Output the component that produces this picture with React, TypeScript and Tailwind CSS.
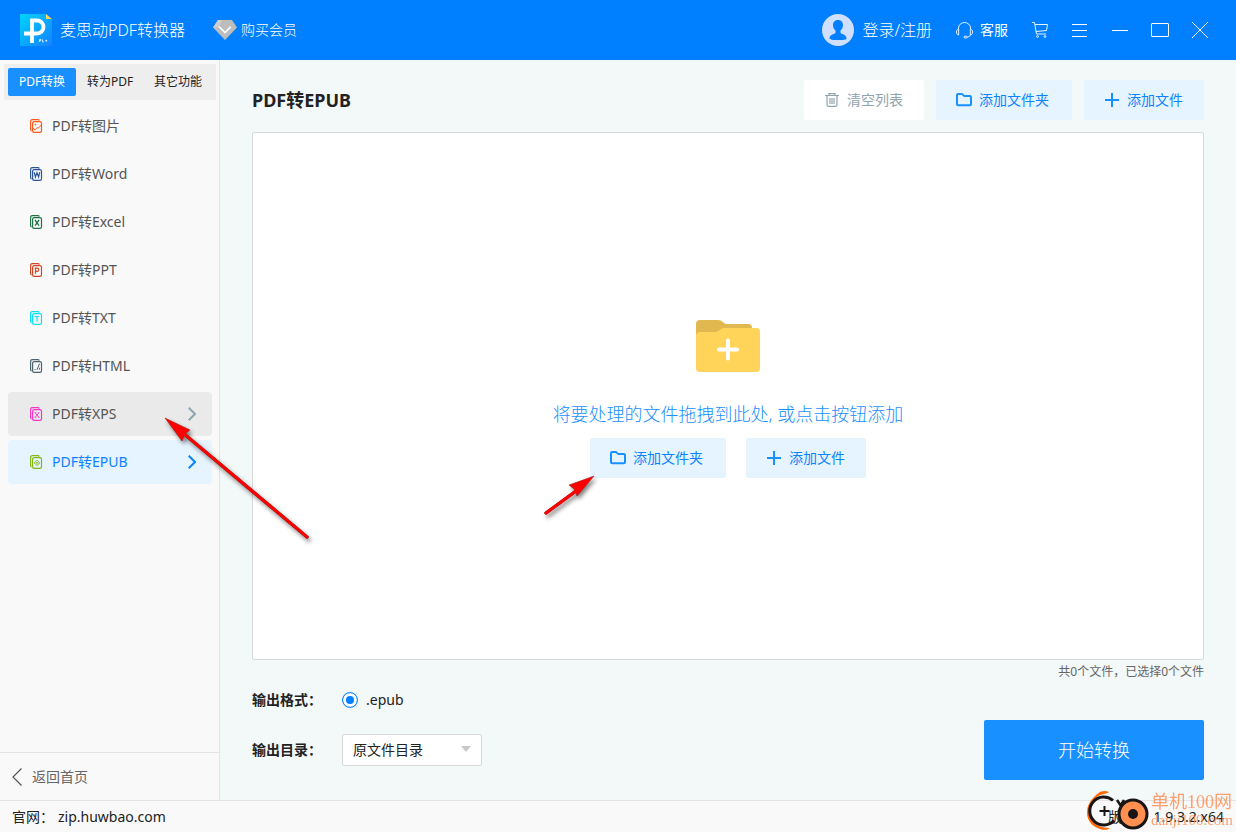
import React, { useState } from 'react';

type Tool = { id: string; label: string; color: string; glyph: React.ReactNode };

const TOOLS: Tool[] = [
  {
    id: 'image',
    label: 'PDF转图片',
    color: '#ff5a1f',
    glyph: (
      <>
        <path d="M3 9.500l2.200 1.200 2-2.200 1 .8 3-3.300" />
        <circle cx="5.500" cy="5.600" r="0.500" />
      </>
    ),
  },
  { id: 'word', label: 'PDF转Word', color: '#2b579a', glyph: <path d="M4.200 5.200l1.200 4.800L7 5.800 8.600 10l1.200-4.800" strokeWidth="1.200" /> },
  { id: 'excel', label: 'PDF转Excel', color: '#217346', glyph: <path d="M5 5l4 5.600M9 5l-4 5.600" strokeWidth="1.300" /> },
  { id: 'ppt', label: 'PDF转PPT', color: '#d24726', glyph: <path d="M5.500 10.800V5.200h1.700a1.500 1.500 0 010 3.200H5.500" strokeWidth="1.200" /> },
  { id: 'txt', label: 'PDF转TXT', color: '#0ce0f5', glyph: <path d="M4.600 5.500h4.800M7 5.500v5.300" strokeWidth="1.200" /> },
  { id: 'html', label: 'PDF转HTML', color: '#4c6370', glyph: <path d="M4.600 10.500h1M9.500 4.600L7 10.800M9.400 8.800v1.800" /> },
  {
    id: 'xps',
    label: 'PDF转XPS',
    color: '#f436c8',
    glyph: <path d="M5.200 5.800l3.600 4.400M8.800 5.800l-3.600 4.400M4.700 5.700h1.500M7.800 5.700h1.500M4.700 10.300h1.500M7.800 10.300h1.500" strokeWidth="0.900" />,
  },
  {
    id: 'epub',
    label: 'PDF转EPUB',
    color: '#84b816',
    glyph: (
      <>
        <path d="M7 5.200L9.700 7.900 7 10.600 4.300 7.900z" />
        <path d="M6.100 7.900h1.800M7 7v1.800" strokeWidth="0.800" />
      </>
    ),
  },
];

const TABS = ['PDF转换', '转为PDF', '其它功能'];

const ToolIcon: React.FC<{ tool: Tool }> = ({ tool }) => (
  <svg width="14" height="14" viewBox="0 0 14 14" className="shrink-0" fill="none" stroke={tool.color} strokeWidth="1" aria-hidden="true">
    <path d="M1.600 12C.9 11.800.6 11.300.6 10.600V2.200C.6 1.200 1.200.6 2.200.6h5.600c.8 0 1.300.3 1.500 1" strokeWidth="1.200" />
    <rect x="2.600" y="2.600" width="8.900" height="10.800" rx="1.600" strokeWidth="1.200" />
    {tool.glyph}
  </svg>
);

const FolderIcon = () => (
  <svg width="16" height="14" viewBox="0 0 16 14" fill="none" stroke="#1890ff" strokeWidth="2" strokeLinejoin="round" aria-hidden="true">
    <path d="M1 11.200V2.200Q1 1 2.200 1h3.400q.5 0 .9.400l1.200 1.200q.4.400.9.400h5.200Q15 3 15 4.200v7q0 1-1.200 1H2.200Q1 12.200 1 11.200z" />
  </svg>
);

const PlusIcon = () => (
  <svg width="16" height="14" viewBox="0 0 16 14" stroke="#1890ff" strokeWidth="2" aria-hidden="true">
    <path d="M8 0v14M1 7h14" />
  </svg>
);

const AddFolderButton = () => (
  <button type="button" className="flex h-10 w-[136px] items-center gap-[7px] rounded-xs bg-[#e6f4ff] pl-5 text-sm text-[#0a84ff]">
    <FolderIcon />
    添加文件夹
  </button>
);

const AddFileButton = () => (
  <button type="button" className="flex h-10 w-[120px] items-center gap-[7px] rounded-xs bg-[#e6f4ff] pl-5 text-sm text-[#0a84ff]">
    <PlusIcon />
    添加文件
  </button>
);

const Logo = () => (
  <svg width="32" height="32" viewBox="0 0 32 32" aria-hidden="true">
    <defs>
      <linearGradient id="logo" x1="0" y1="0" x2="1" y2="1">
        <stop offset="0" stopColor="#00d5ff" />
        <stop offset="1" stopColor="#1580ff" />
      </linearGradient>
    </defs>
    <path d="M0 0h26l6 6v26H0z" fill="url(#logo)" />
    <path d="M26 0v5h6z" fill="#ffd45c" />
    <path d="M12 29V6.500h5a6.500 6.500 0 010 13H4" fill="none" stroke="#fff" strokeWidth="3.800" />
    <path d="M19.500 28v-2.500h1.500v1.200h-1.500M22.500 25.500v2.300h1.500M25.300 26.700h2M26.300 25.700v2" fill="none" stroke="#fff" strokeWidth="0.700" />
  </svg>
);

const WindowButton: React.FC<{ label: string; children: React.ReactNode }> = ({ label, children }) => (
  <button type="button" aria-label={label} className="flex h-6 w-6 items-center justify-center">
    {children}
  </button>
);

const TopBar = () => (
  <header className="flex h-[60px] items-center bg-[#007fff] pr-6 pl-5 text-white">
    <Logo />
    <h1 className="ml-2 text-base font-light">麦思动PDF转换器</h1>
    <button type="button" className="ml-7 flex items-center gap-1 text-sm font-light">
      <svg width="24" height="20" viewBox="0 0 24 20" aria-hidden="true">
        <path d="M5 0h14l5 7.500L12 20 0 7.500z" fill="#bdbdbd" />
        <path d="M5 0L0 7.500h6L9 0z" fill="#cecece" />
        <path d="M6.500 7l5.500 5.500L17.500 7" fill="none" stroke="#fff" strokeWidth="1.600" strokeLinecap="round" />
      </svg>
      购买会员
    </button>
    <button type="button" className="ml-auto flex items-center gap-2 text-base font-light">
      <svg width="32" height="32" viewBox="0 0 32 32" aria-hidden="true">
        <circle cx="16" cy="16" r="16" fill="#cfdfff" />
        <path
          d="M16 6c3.200 0 5 2.200 5 5 0 2.500-1 4.300-2.500 5.500v1.700c0 .8.500 1.200 1.300 1.500 2.700 1 4.700 2 4.700 5 0 1-3.500 1.300-8.500 1.300s-8.500-.3-8.500-1.300c0-3 2-4 4.700-5 .8-.3 1.300-.7 1.300-1.500v-1.700C12 15.300 11 13.500 11 11c0-2.800 1.800-5 5-5z"
          fill="#007fff"
        />
      </svg>
      登录/注册
    </button>
    <button type="button" className="ml-6 flex items-center gap-[7px] text-sm">
      <svg width="17" height="17" viewBox="0 0 17 17" fill="none" stroke="#fff" strokeWidth="0.900" aria-hidden="true">
        <path d="M2.500 7V6a6 5.500 0 0112 0v1M2.700 7.200c-1.400 0-2.200 1-2.200 2.800s.8 3 2.200 3zM14.300 7.200c1.400 0 2.200 1 2.200 2.800s-.8 3-2.200 3zM14.300 13q-.5 2-3.300 2.200" />
        <rect x="8" y="14.200" width="3" height="1.800" rx="0.900" />
      </svg>
      客服
    </button>
    <div className="ml-5 flex items-center gap-4">
      <WindowButton label="购物车">
        <svg width="16" height="16" viewBox="0 0 16 16" fill="none" stroke="#fff" strokeWidth="0.900" aria-hidden="true">
          <path d="M0 .5h2.500l2 11.500h9.500M3 2.500h12.500L14.500 8.500 4 9.500" />
          <circle cx="5.500" cy="14.500" r="0.900" />
          <circle cx="13" cy="14.500" r="0.900" />
        </svg>
      </WindowButton>
      <WindowButton label="菜单">
        <svg width="16" height="14" viewBox="0 0 16 14" stroke="#fff" aria-hidden="true">
          <path d="M0 1.500h15M0 7.500h15M0 13.500h15" />
        </svg>
      </WindowButton>
      <WindowButton label="最小化">
        <svg width="16" height="16" viewBox="0 0 16 16" stroke="#fff" aria-hidden="true">
          <path d="M0 8.500h16" />
        </svg>
      </WindowButton>
      <WindowButton label="最大化">
        <svg width="18" height="14" viewBox="0 0 18 14" fill="none" stroke="#fff" aria-hidden="true">
          <rect x="0.500" y="0.500" width="17" height="13" rx="0.500" />
        </svg>
      </WindowButton>
      <WindowButton label="关闭">
        <svg width="16" height="16" viewBox="0 0 16 16" stroke="#fff" aria-hidden="true">
          <path d="M0 0l16 16M16 0L0 16" />
        </svg>
      </WindowButton>
    </div>
  </header>
);

const Sidebar = () => {
  const [tab, setTab] = useState(TABS[0]);
  const [active, setActive] = useState('epub');
  const hovered = 'xps';

  return (
    <aside className="flex w-[220px] shrink-0 flex-col border-r border-[#e4e4e4] bg-[#f9f9f9]">
      <div className="mr-[3px] ml-1 mt-1 flex rounded-xs bg-[#eeeeee] p-1 text-xs">
        {TABS.map((name) => (
          <button
            key={name}
            type="button"
            onClick={() => setTab(name)}
            className={`h-7 flex-1 rounded-xs ${tab === name ? 'bg-[#1890ff] text-white' : 'text-[#222222]'}`}
          >
            {name}
          </button>
        ))}
      </div>
      <nav className="mt-1 mr-[7px] ml-2 flex flex-1 flex-col gap-1">
        {TOOLS.map((tool) => {
          const isActive = tool.id === active;
          const isHovered = tool.id === hovered;
          return (
            <button
              key={tool.id}
              type="button"
              onClick={() => setActive(tool.id)}
              className={`flex h-11 items-center rounded-sm pr-4 pl-[22px] text-sm ${
                isActive ? 'bg-[#e6f4ff] text-[#1080ff]' : isHovered ? 'bg-[#eaeaea] text-[#555555]' : 'text-[#555555]'
              }`}
            >
              <ToolIcon tool={tool} />
              <span className="ml-2">{tool.label}</span>
              {(isActive || isHovered) && (
                <svg width="8" height="14" viewBox="0 0 8 14" className="ml-auto" fill="none" stroke={isActive ? '#0a84ff' : '#90a4ae'} strokeWidth="2" aria-hidden="true">
                  <path d="M.7.700L7 7 .7 13.300" />
                </svg>
              )}
            </button>
          );
        })}
      </nav>
      <button type="button" className="flex h-12 items-center gap-2.5 border-t border-[#e4e4e4] pl-3 text-sm text-[#666666]">
        <svg width="10" height="18" viewBox="0 0 10 18" fill="none" stroke="#555" strokeWidth="1.200" aria-hidden="true">
          <path d="M9.500.5L1 9l8.500 8.500" />
        </svg>
        返回首页
      </button>
    </aside>
  );
};

const Workspace = () => (
  <main className="flex min-w-0 flex-1 flex-col bg-[#f3f8f9] px-8 pt-5 pb-5">
    <div className="flex items-center gap-3">
      <h2 className="mr-auto text-lg font-bold text-[#222222]">PDF转EPUB</h2>
      <button type="button" className="flex h-10 w-[120px] items-center gap-[7px] rounded-xs bg-white pl-5 text-sm text-[#90a4ae]">
        <svg width="16" height="14" viewBox="0 0 16 14" fill="none" stroke="#90a4ae" strokeWidth="1.200" aria-hidden="true">
          <path d="M1 2.500h14M5 2V.6h6V2M3 2.500v9.300q0 1.600 1.600 1.600h6.800q1.600 0 1.600-1.600V2.500M6 5v6M8 5v6M10 5v6" />
        </svg>
        清空列表
      </button>
      <AddFolderButton />
      <AddFileButton />
    </div>

    <section className="mt-3 flex flex-1 flex-col items-center justify-center rounded-xs border border-[#d9d9d9] bg-white pt-1.5">
      <svg width="64" height="52" viewBox="0 0 64 52" aria-hidden="true">
        <path d="M0 4q0-4 4-4h18q3 0 5 2l1 1q1.500 1 3 1h21q4 0 4 4v12H0z" fill="#e0b84f" />
        <path d="M0 16q0-4 4-4h15q2 0 3.500-1.200l2-1.600Q26 8 28 8h32q4 0 4 4v36q0 4-4 4H4q-4 0-4-4z" fill="#ffd459" />
        <path d="M32 20.500v18M23 29.500h18" stroke="#fff" strokeWidth="4" strokeLinecap="round" />
      </svg>
      <p className="mt-[30px] text-lg leading-6 font-light text-[#1890ff]">将要处理的文件拖拽到此处, 或点击按钮添加</p>
      <div className="mt-3 flex gap-5">
        <AddFolderButton />
        <AddFileButton />
      </div>
    </section>
    <p className="text-right text-xs leading-6 text-[#666666]">共0个文件，已选择0个文件</p>

    <div className="flex items-end justify-between">
      <div className="flex flex-col gap-[18px] self-start pb-3.5 text-sm text-[#222222]">
        <div className="flex h-8 items-center">
          <span className="w-[90px] font-bold">输出格式：</span>
          <label className="flex items-center gap-2">
            <input
              type="radio"
              name="format"
              defaultChecked
              className="h-4 w-4 appearance-none rounded-full border border-[#1890ff] bg-white shadow-[inset_0_0_0_3px_#ffffff] checked:bg-[#007fff]"
            />
            .epub
          </label>
        </div>
        <div className="flex h-8 items-center">
          <label htmlFor="target" className="w-[90px] font-bold">
            输出目录：
          </label>
          <div className="relative">
            <select id="target" className="h-8 w-[140px] appearance-none rounded-xs border border-[#d9d9d9] bg-white pl-2.5 text-sm">
              <option>原文件目录</option>
            </select>
            <svg width="10" height="6" viewBox="0 0 10 6" className="pointer-events-none absolute top-3 right-[11px]" aria-hidden="true">
              <path d="M0 0h10L5 6z" fill="#c8c8c8" />
            </svg>
          </div>
        </div>
      </div>
      <button type="button" className="h-[60px] w-[220px] rounded-xs bg-[#1890ff] text-lg font-light text-white">
        开始转换
      </button>
    </div>
  </main>
);

const Arrow: React.FC<{ className: string; width: number; height: number; line: string; head: string }> = ({ className, width, height, line, head }) => (
  <svg width={width} height={height} viewBox={`0 0 ${width} ${height}`} className={className} aria-hidden="true">
    <g className="drop-shadow-[2px_3px_2px_rgba(0,0,0,0.5)]">
      <path d={line} stroke="#901515" strokeWidth="3.400" strokeLinecap="round" />
      <path d={head} fill="#ff0000" stroke="#901515" strokeWidth="0.500" />
      <path d={line} stroke="#ff0000" strokeWidth="2.800" strokeLinecap="round" />
    </g>
  </svg>
);

const Watermark = () => (
  <div className="pointer-events-none absolute right-0 bottom-0 flex items-center pr-[3px] text-[#ff8a4c]">
    <svg width="66" height="44" viewBox="0 0 66 44" fill="none" aria-hidden="true">
      <path d="M24 4C17 1 13 5 9 9 4 14 2 19 2 25c0 8 6 14 13 16 4 1.500 8 1 10-1-9 0-20-4-20-15C5 14 11 8 17 6.500c3-.8 5-1 7-2.500z" fill="#ff6a00" />
      <path d="M28 12.500a14 14 0 101 20" stroke="#1a1414" strokeWidth="3" />
      <path d="M32 12l4 6M39 12l-3 5" stroke="#1a1414" strokeWidth="2.500" />
      <circle cx="48" cy="26" r="14" fill="#ff9050" stroke="#1a1414" strokeWidth="3" />
      <circle cx="48" cy="26" r="5" fill="#1a1414" />
      <path d="M19.500 18v10M14.500 23h10" stroke="#1a1414" strokeWidth="2" />
    </svg>
    <div className="font-['Liberation_Serif','Noto_Sans_CJK_SC',serif] opacity-80">
      <p className="text-lg leading-5">单机100网</p>
      <p className="text-[15px] leading-4">danji100.com</p>
    </div>
  </div>
);

const App: React.FC = () => (
  <div className="relative flex min-h-screen flex-col overflow-hidden font-['Noto_Sans','Noto_Sans_CJK_SC',sans-serif]">
    <TopBar />
    <div className="flex flex-1">
      <Sidebar />
      <Workspace />
    </div>
    <footer className="flex h-8 items-center justify-between border-t border-[#e4e4e4] bg-[#f9f9f9] px-3 text-sm text-[#222222]">
      <p>
        官网：
        <a href="#home" className="ml-1">
          zip.huwbao.com
        </a>
      </p>
      <p>版本： 1.9.3.2.x64</p>
    </footer>

    <Arrow
      className="pointer-events-none absolute top-[412px] left-[160px]"
      width={160}
      height={140}
      line="M23 21L147 125"
      head="M5 6L30 18 25 22 22 29z"
    />
    <Arrow
      className="pointer-events-none absolute top-[470px] left-[538px]"
      width={66}
      height={54}
      line="M8 43L38 21"
      head="M56 6L31 15 37 20 39 26z"
    />
    <Watermark />
  </div>
);

export default App;
